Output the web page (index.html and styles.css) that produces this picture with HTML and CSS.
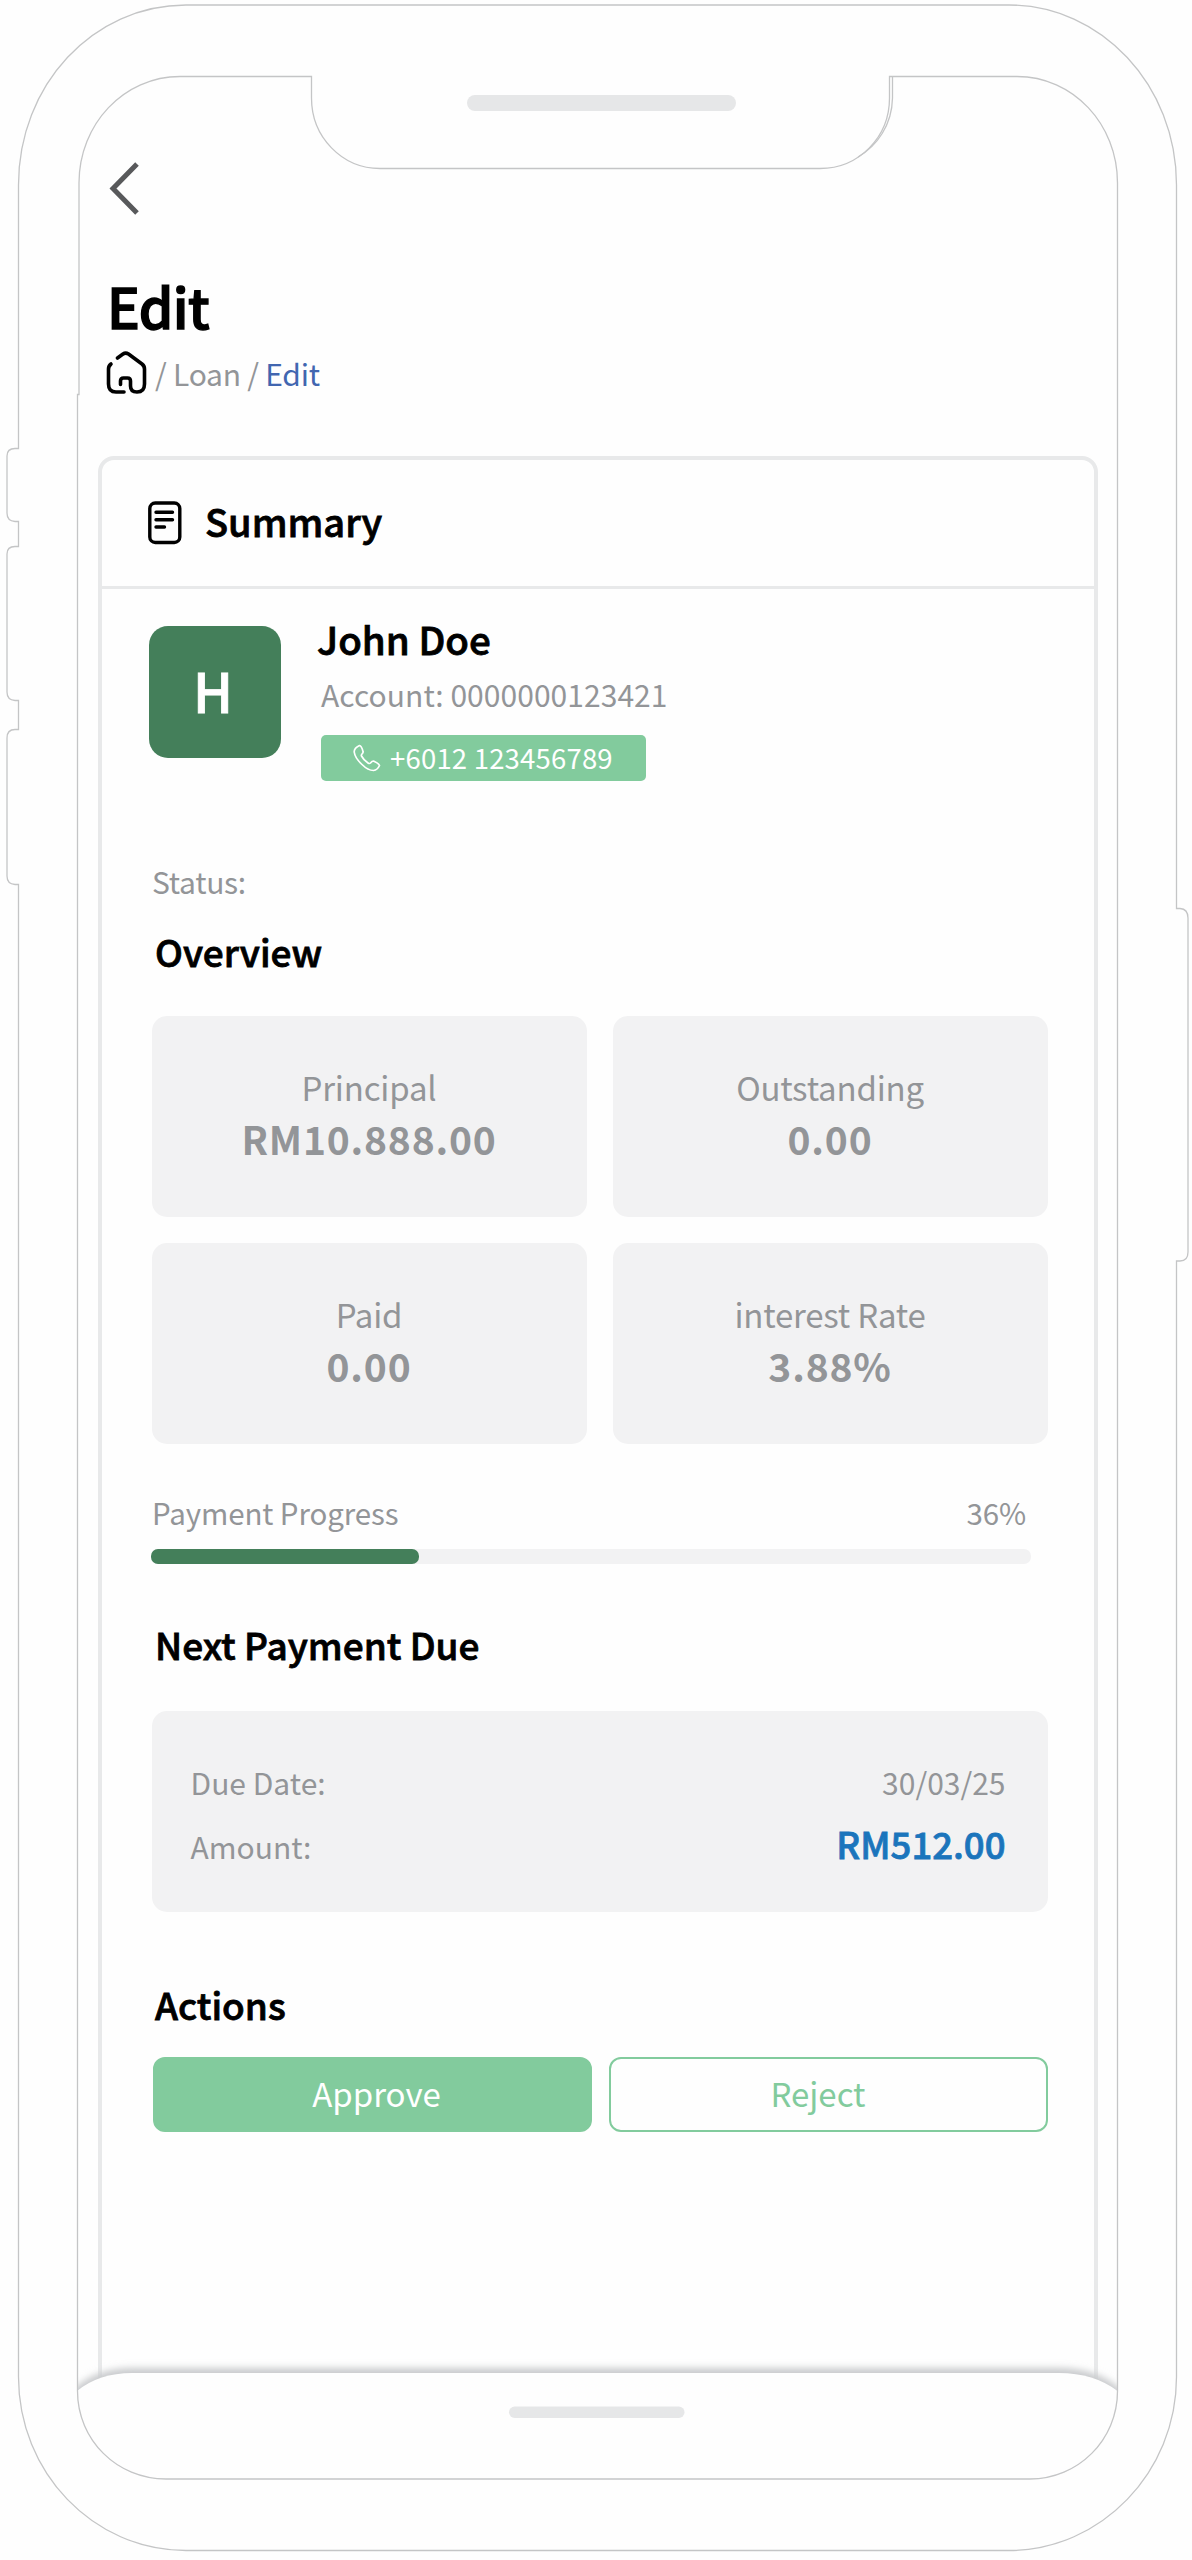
FILE: index.html
```html
<!DOCTYPE html>
<html lang="en">

<head>
    <meta charset="UTF-8">
    <meta name="viewport" content="width=device-width, initial-scale=1.0">
    <title>Edit</title>
    <link rel="stylesheet" href="styles.css">
</head>

<body>
    <div class="phone">
        <div class="screen">
            <a class="back">
                <svg width="32" height="56" viewBox="0 0 32 56">
                    <path d="M29 4L5 28.5L29 53" />
                </svg>
            </a>

            <h1 class="title">Edit</h1>
            <div class="breadcrumb">
                <svg width="42" height="44" viewBox="0 0 42 44">
                    <path d="M11.500 7L17 3Q19.600 1.200 22.500 3L36 13Q38.500 15 38.500 18V33Q38.500 41 31 41Q24.500 41 24.500 35V30Q24.500 27 21.500 27H17.500Q14.500 27 14.500 30V33.500" />
                    <path d="M5 13Q2.500 15 2.500 18V33Q2.500 41 10 41H18" />
                </svg>
                <p>/ Loan / <span class="current">Edit</span></p>
            </div>

            <div class="card">
                <div class="card-head">
                    <svg width="36" height="46" viewBox="0 0 36 46">
                        <rect x="2.800" y="3" width="30" height="39.500" rx="5.500" />
                        <path d="M9 12.200H25.500M9 19.700H25.500M9 27H17.500" />
                    </svg>
                    <h2 class="card-title">Summary</h2>
                </div>

                <div class="profile">
                    <div class="avatar">H</div>
                    <div class="info">
                        <h3 class="name">John Doe</h3>
                        <p class="account">Account: 0000000123421</p>
                        <div class="phone-number">
                            <svg width="28" height="28" viewBox="0 0 28 28">
                                <path d="M6.500 1.500Q1 4 1.200 8Q2 14 9 20.500Q15 26.500 20.500 26.500Q24.500 26 26.500 21.500Q26 19.500 20.500 17Q19 17 17.500 19Q16.500 20 15 19Q10.500 16 8.500 12Q8 11 9 10Q10.500 8.500 10 7.500Q8.500 1.800 6.500 1.500Z" />
                            </svg>
                            <span>+6012 123456789</span>
                        </div>
                    </div>
                </div>

                <p class="status">Status:</p>

                <h3 class="heading overview">Overview</h3>
                <div class="tiles">
                    <div class="tile">
                        <p class="label">Principal</p>
                        <p class="value">RM10.888.00</p>
                    </div>
                    <div class="tile">
                        <p class="label">Outstanding</p>
                        <p class="value">0.00</p>
                    </div>
                    <div class="tile">
                        <p class="label">Paid</p>
                        <p class="value">0.00</p>
                    </div>
                    <div class="tile">
                        <p class="label">interest Rate</p>
                        <p class="value">3.88%</p>
                    </div>
                </div>

                <div class="progress-text">
                    <span>Payment Progress</span>
                    <span>36%</span>
                </div>
                <div class="progress">
                    <div class="progress-fill"></div>
                </div>

                <h3 class="heading next">Next Payment Due</h3>
                <div class="due">
                    <div class="due-row">
                        <span>Due Date:</span>
                        <span>30/03/25</span>
                    </div>
                    <div class="due-row">
                        <span>Amount:</span>
                        <span class="amount">RM512.00</span>
                    </div>
                </div>

                <h3 class="heading actions">Actions</h3>
                <div class="buttons">
                    <button class="btn approve">Approve</button>
                    <button class="btn reject">Reject</button>
                </div>
            </div>
        </div>

        <!-- phone outline, notch and bottom bar -->
        <svg class="frame" width="1192" height="2560" viewBox="0 0 1192 2560">
            <defs>
                <clipPath id="inside">
                    <path d="M77.500 2300H1117.500V2391C1117.500 2440 1078 2479 1030 2479H166C117 2479 77.500 2440 77.500 2391Z" />
                </clipPath>
                <filter id="blur" x="-5%" y="-20%" width="110%" height="140%">
                    <feGaussianBlur stdDeviation="3.500" />
                </filter>
            </defs>

            <g clip-path="url(#inside)">
                <path class="bar-shadow" filter="url(#blur)" d="M60 2400L77 2386Q99 2368 132 2368H1059Q1094 2368 1117 2386L1135 2400V2500H60Z" />
                <path class="bar" d="M77 2391Q99 2373 132 2373H1059Q1094 2373 1117.500 2391V2500H77Z" />
            </g>
            <rect class="pill" x="509" y="2406.500" width="175.500" height="11.500" rx="5.700" />
            <rect class="pill" x="467" y="95" width="269" height="16" rx="8" />

            <path class="line" d="M186 5H1009C1101 5 1176.500 85 1176.500 185V908.500H1180Q1188 909 1188 918V1252Q1188 1261 1180 1261H1176.500V2377C1176.500 2472 1101 2550.500 1009 2550.500H186C93 2550.500 18.500 2472 18.500 2377V884.500H15Q7 884 7 876V738Q7 729.500 15 729.500H18.500V700.500H15Q7 700 7 692V554Q7 546.500 15 546.500H18.500V521.500H15Q7 521 7 513V456Q7 448.500 15 448.500H18.500V185C18.500 85 93 5 186 5Z" />
            <path class="line" d="M311.500 76.500V98C311.500 137 342 168.500 380 168.500H820C859 168.500 889.500 137 889.500 98V76.500H1017C1073 76.500 1117.500 124 1117.500 183V2391C1117.500 2440 1078 2479 1030 2479H166C117 2479 77.500 2440 77.500 2391V394.500H79V183C79 124 124 76.500 180 76.500Z" />
            <path class="line" d="M892.500 76.500V98C892 125 877 146 858 157" />
        </svg>
    </div>
</body>

</html>
```
FILE: styles.css
```css
* {
    margin: 0;
    padding: 0;
    box-sizing: border-box;
}

body {
    background-color: #fefefe;
    font-family: "Noto Sans CJK SC", "Noto Sans", sans-serif;
    color: #939598;
}

.phone {
    position: relative;
    width: 1192px;
    height: 2560px;
    overflow: hidden;
}

.frame {
    position: absolute;
    top: 0;
    left: 0;
}

.line {
    fill: none;
    stroke: #c4c5c6;
    stroke-width: 1.3;
}

.pill {
    fill: #e6e7e8;
}

.bar {
    fill: #fefefe;
}

.bar-shadow {
    fill: #c9cbcd;
}

.screen {
    padding: 160px 95px 0 98px;
}

.back {
    display: block;
    height: 56px;
    padding-left: 10px;
}

.back path {
    fill: none;
    stroke: #58595b;
    stroke-width: 5;
}

.title,
.card-title,
.name,
.heading,
.avatar,
.amount {
    font-weight: 500;
    -webkit-text-stroke: 0.8px currentColor;
}

.title,
.card-title,
.name,
.heading {
    color: #000;
}

.title {
    margin: 56px 0 0 9px;
    font-size: 55px;
    line-height: 66px;
    letter-spacing: -0.6px;
    -webkit-text-stroke-width: 1.4px;
}

.breadcrumb {
    display: flex;
    gap: 7px;
    margin: 13px 0 0 8px;
    height: 44px;
    font-size: 30px;
    line-height: 44px;
    letter-spacing: -0.25px;
}

.breadcrumb path,
.card-head path,
.card-head rect {
    fill: none;
    stroke: #000;
    stroke-width: 3.6;
    stroke-linecap: round;
    stroke-linejoin: round;
}

.current {
    color: #4166b0;
}

.card {
    width: 1000px;
    height: 1950px;
    margin-top: 61px;
    border: 4px solid #e8e9ea;
    border-radius: 16px;
}

.card-head {
    display: flex;
    align-items: center;
    gap: 22px;
    height: 129px;
    padding: 0 45px 4px;
    border-bottom: 3px solid #e8e9ea;
}

.card-head svg {
    margin-top: 4px;
}

.card-head path,
.card-head rect {
    stroke-width: 3.4;
}

.card-title {
    font-size: 38px;
    line-height: 50px;
}

.profile {
    display: flex;
    gap: 36px;
    padding: 26px 47px 0;
}

.avatar {
    width: 132px;
    height: 132px;
    margin-top: 11px;
    border-radius: 19px;
    background-color: #447f5a;
    color: #fff;
    font-size: 54px;
    line-height: 127px;
    text-align: center;
    padding-right: 4px;
}

.name {
    font-size: 38.5px;
    line-height: 46px;
}

.account {
    margin: 13px 0 0 4px;
    font-size: 30px;
    line-height: 40px;
    letter-spacing: 0.05px;
}

.phone-number {
    display: flex;
    align-items: center;
    gap: 9px;
    width: 325px;
    height: 46px;
    margin: 21px 0 0 4px;
    padding-left: 32px;
    border-radius: 5px;
    background-color: #82cb9d;
    color: #fff;
    font-size: 27.5px;
    line-height: 42px;
    letter-spacing: 0.2px;
}

.phone-number span {
    margin-top: -3px;
}

.phone-number path {
    fill: none;
    stroke: #fff;
    stroke-width: 1.7;
    stroke-linejoin: round;
}

.status {
    margin: 80px 0 0 50px;
    font-size: 30px;
    line-height: 40px;
    letter-spacing: -0.3px;
}

.heading {
    margin-left: 53px;
    font-size: 37px;
    line-height: 48px;
}

.overview {
    margin-top: 26px;
}

.tiles {
    display: grid;
    grid-template-columns: 435px 435px;
    grid-auto-rows: 201px;
    gap: 26px;
    margin: 41px 0 0 49.5px;
}

.tile {
    padding-top: 50px;
    border-radius: 15px;
    background-color: #f2f2f3;
    text-align: center;
}

.label {
    font-size: 33px;
    line-height: 42px;
    letter-spacing: -0.2px;
}

.value {
    margin-top: 5px;
    font-size: 39px;
    font-weight: 700;
    line-height: 50px;
    letter-spacing: 0.8px;
}

.progress-text {
    display: flex;
    justify-content: space-between;
    margin: 48px 68px 0 50px;
    font-size: 29.5px;
    line-height: 40px;
    letter-spacing: -0.1px;
}

.progress {
    width: 880px;
    height: 15px;
    margin: 17px 0 0 49px;
    border-radius: 7px;
    background-color: #f2f2f3;
}

.progress-fill {
    width: 268px;
    height: 100%;
    border-radius: 7px;
    background-color: #447f5a;
}

.next {
    margin-top: 56px;
}

.due {
    width: 896px;
    height: 201px;
    margin: 43px 0 0 49.5px;
    padding: 51px 42px 0 39px;
    border-radius: 15px;
    background-color: #f2f2f3;
}

.due-row {
    display: flex;
    justify-content: space-between;
    align-items: baseline;
    margin-bottom: 22px;
    font-size: 30px;
    line-height: 40px;
}

.amount {
    color: #1b75bc;
    font-size: 36.5px;
}

.actions {
    margin: 68px 0 0 53px;
}

.buttons {
    display: flex;
    gap: 17px;
    margin: 29px 0 0 50.5px;
}

.btn {
    width: 439px;
    height: 75px;
    padding-bottom: 4px;
    border: 2px solid #82cb9d;
    border-radius: 12px;
    background-color: transparent;
    color: #82cb9d;
    font-family: inherit;
    font-size: 33px;
    line-height: 42px;
}

.approve {
    padding-left: 9px;
    background-color: #82cb9d;
    color: #fff;
}

.reject {
    padding-right: 20px;
}
```
